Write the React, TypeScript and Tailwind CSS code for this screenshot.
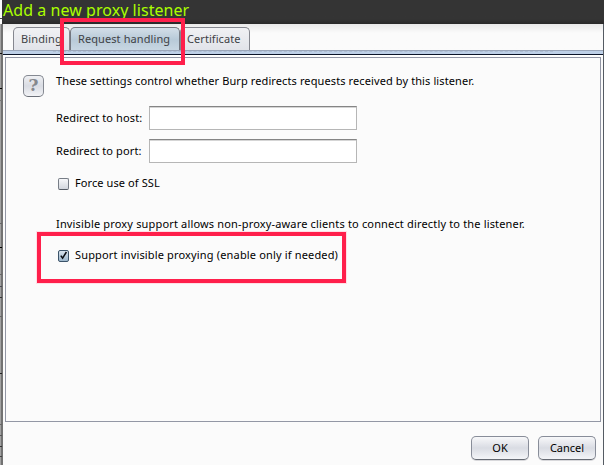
import type { ReactNode } from 'react';

function Tab({ children, active = false, className }: { children: ReactNode; active?: boolean; className: string }) {
  return (
    <div
      className={`h-6 shrink-0 rounded-t-[5px] border border-b-0 text-[11px] leading-[22px] whitespace-nowrap text-[#404246] ${
        active
          ? 'border-[#73777f] bg-linear-to-b from-[#d3dee8] via-[#b8cad8] to-[#c9d8e4]'
          : 'border-[#85878f] bg-linear-to-b from-[#f0f1f4] to-[#e1e3e9]'
      } ${className}`}
    >
      {children}
    </div>
  );
}

function Field({ label }: { label: string }) {
  return (
    <div className="flex h-6 items-center">
      <span className="w-[93px] tracking-[0.11px]">{label}</span>
      <div className="h-6 w-[208px] border border-[#b6b6b6] border-t-[#858585] bg-white shadow-[inset_0_1px_0_#d5d5d5]" />
    </div>
  );
}

function Checkbox({ checked = false }: { checked?: boolean }) {
  return (
    <div
      className={`h-3 w-[11px] shrink-0 rounded-[2px] border ${
        checked
          ? 'border-[#3b5369] bg-linear-to-b from-[#d7e2ec] to-[#9db7cc]'
          : 'border-[#777d86] border-b-[#555b64] bg-linear-to-b from-[#f7f8fa] to-[#d2d6dd]'
      }`}
    >
      {checked && (
        <svg viewBox="0 0 9 10" className="h-[10px] w-[9px]" fill="none" stroke="#080b10" strokeWidth="1.5">
          <path d="M1.8 4.6 3.6 7.2 7.4 1" />
        </svg>
      )}
    </div>
  );
}

function Button({ children, className }: { children: ReactNode; className: string }) {
  return (
    <div
      className={`h-6 rounded-[5px] border border-[#888d99] border-b-[#656a73] bg-linear-to-b from-[#f8f8fa] via-[#d9dce3] to-[#f4f5f8] text-center text-[11px] leading-[22px] shadow-[0_1px_0_#d8d8db] ${className}`}
    >
      {children}
    </div>
  );
}

const edgeMarks = [
  'top-[18px] bg-[#444]',
  'top-[53px] bg-[#111]',
  'top-[88px] bg-black',
  'top-[100px] bg-[#777]',
  'top-[223px] bg-[#666]',
  'top-[247px] bg-black',
  'top-[274px] bg-[#666]',
  'top-[286px] bg-[#4b4b54]',
  'top-[297px] bg-[#333]',
  'top-[316px] bg-[#666]',
  'top-[373px] bg-[#222]',
  'top-[424px] bg-[#666]',
  'top-[435px] bg-[#555]',
  'top-[446px] bg-[#333]',
  'top-[456px] bg-[#444]',
];

export default function App() {
  return (
    <div className="relative flex h-[465px] w-[604px] flex-col overflow-hidden bg-[#fbfbfb] font-['Noto_Sans','Open_Sans',sans-serif] text-[11px] text-black">
      <header className="ml-[2px] h-6 shrink-0 bg-linear-to-b from-[#343434] from-80% to-[#292929] pl-px text-[16px] leading-[21px] tracking-[0.05px] whitespace-nowrap text-[#aaff00]">
        Add a new proxy listener
      </header>
      <div className="flex min-h-0 flex-1">
        <div className="w-[3px] shrink-0 border-r-2 border-[#727272] bg-[#a2a2a2]" />
        <main className="flex min-w-0 flex-1 flex-col border-r border-[#555b63]">
          <div className="flex h-[31px] shrink-0 flex-col border-b border-[#0b1428] bg-linear-to-b from-[#e9e9e9] to-[#fbfbfb] to-30%">
            <div className="flex h-[26px] shrink-0 items-start pt-[3px] pl-[10px]">
              <Tab className="w-[57px] pl-[7px] tracking-[0.14px]">Binding</Tab>
              <Tab active className="w-[110px] pl-[7px] tracking-[0.09px]">Request handling</Tab>
              <Tab className="w-[70px] pl-[6px] tracking-[0.07px]">Certificate</Tab>
            </div>
            <div className="relative z-10 h-1 border-t border-[#9ba6b9] bg-[#bed0e7]">
              <div className="mx-[50px] h-px border-t border-dashed border-[#a5b2c5] opacity-60" />
            </div>
          </div>
          <div className="h-[2px] shrink-0 bg-white" />
          <section className="mx-[2px] flex h-[365px] shrink-0 flex-col border border-[#9397a5] pl-[50px]">
            <div className="-ml-[33px] mt-[14px] flex h-[26px]">
              <div className="mt-[3px] h-[22px] w-[21px] rounded-[5px] border border-[#858992] border-b-[#6b6f78] bg-linear-to-b from-[#eff0f3] via-[#d9dce3] to-[#f2f3f6] text-center font-['DejaVu_Serif','Liberation_Serif',serif] text-[17px] leading-[19px] font-bold text-[#85888d]">
                ?
              </div>
              <p className="ml-3 h-5 leading-[17px] tracking-[0.108px] whitespace-nowrap">
                These settings control whether Burp redirects requests received by this listener.
              </p>
            </div>
            <div className="mt-[8px] flex flex-col gap-[9px]">
              <Field label="Redirect to host:" />
              <Field label="Redirect to port:" />
            </div>
            <div className="mt-[13px] ml-[2px] flex h-4 items-center gap-[6px]">
              <Checkbox />
              <span className="-mt-px tracking-[0.09px]">Force use of SSL</span>
            </div>
            <p className="mt-[24px] h-4 leading-4 tracking-[0.163px] whitespace-nowrap">
              Invisible proxy support allows non-proxy-aware clients to connect directly to the listener.
            </p>
            <div className="mt-[16px] ml-[2px] flex h-4 items-center gap-[6px]">
              <Checkbox checked />
              <span className="-mt-px tracking-[0.16px] whitespace-nowrap">Support invisible proxying (enable only if needed)</span>
            </div>
          </section>
          <footer className="mt-[14px] mr-[7px] flex justify-end gap-[9px]">
            <Button className="w-[58px]">OK</Button>
            <Button className="w-[58px]">Cancel</Button>
          </footer>
        </main>
      </div>
      {edgeMarks.map((mark) => (
        <div key={mark} className={`absolute left-0 h-px w-[2px] ${mark}`} />
      ))}
      <div className="absolute top-[18px] left-[60px] z-20 h-[47px] w-[125px] border-4 border-[#ff1f4b]" />
      <div className="absolute top-[232px] left-[37px] z-20 h-[51px] w-[309px] border-4 border-[#ff1f4b] shadow-[0_0_0_1px_#ffdfe5]" />
    </div>
  );
}
